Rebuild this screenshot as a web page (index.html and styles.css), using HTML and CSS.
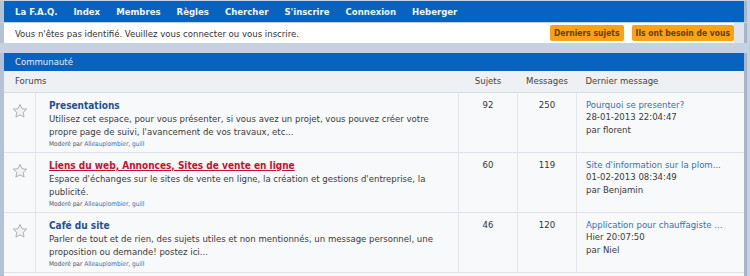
FILE: index.html
```html
<!DOCTYPE html>
<html>
<head>
  <meta charset="utf-8">
  <title>Forum plomberie</title>
  <link rel="stylesheet" href="styles.css">
</head>
<body>
  <div class="nav">
    <a href="#">La F.A.Q.</a>
    <a href="#">Index</a>
    <a href="#">Membres</a>
    <a href="#">Règles</a>
    <a href="#">Chercher</a>
    <a href="#">S'inscrire</a>
    <a href="#">Connexion</a>
    <a href="#">Heberger</a>
  </div>

  <div class="infobar">
    <span class="notice">Vous n'êtes pas identifié. Veuillez vous connecter ou vous inscrire.</span>
    <div class="btns">
      <a class="btn" href="#">Derniers sujets</a>
      <a class="btn" href="#">Ils ont besoin de vous</a>
    </div>
  </div>

  <div class="category">
    <div class="category-title">Communauté</div>
    <table class="forums">
      <tr class="head">
        <th class="c-forum" colspan="2">Forums</th>
        <th class="c-num">Sujets</th>
        <th class="c-num">Messages</th>
        <th class="c-last">Dernier message</th>
      </tr>
      <tr class="row">
        <td class="c-icon">
          <svg class="star" viewBox="0 0 20 20"><path d="M10 1.8l2.5 5.3 5.8.7-4.3 4 1.1 5.8L10 14.8l-5.1 2.8 1.1-5.8-4.3-4 5.8-.7z"/></svg>
        </td>
        <td class="c-forum">
          <a class="title" href="#">Presentations</a>
          <p class="desc">Utilisez cet espace, pour vous présenter, si vous avez un projet, vous pouvez créer votre propre page de suivi, l'avancement de vos travaux, etc...</p>
          <p class="mods">Moderé par <a href="#">Alleauplombier</a>, <a href="#">guill</a></p>
        </td>
        <td class="c-num">92</td>
        <td class="c-num">250</td>
        <td class="c-last">
          <a href="#">Pourquoi se presenter?</a><br>
          28-01-2013 22:04:47<br>
          par florent
        </td>
      </tr>
      <tr class="row">
        <td class="c-icon">
          <svg class="star" viewBox="0 0 20 20"><path d="M10 1.8l2.5 5.3 5.8.7-4.3 4 1.1 5.8L10 14.8l-5.1 2.8 1.1-5.8-4.3-4 5.8-.7z"/></svg>
        </td>
        <td class="c-forum">
          <a class="title hover" href="#">Liens du web, Annonces, Sites de vente en ligne</a>
          <p class="desc">Espace d'échanges sur le sites de vente en ligne, la création et gestions d'entreprise, la publicité.</p>
          <p class="mods">Moderé par <a href="#">Alleauplombier</a>, <a href="#">guill</a></p>
        </td>
        <td class="c-num">60</td>
        <td class="c-num">119</td>
        <td class="c-last">
          <a href="#">Site d'information sur la plom...</a><br>
          01-02-2013 08:34:49<br>
          par Benjamin
        </td>
      </tr>
      <tr class="row">
        <td class="c-icon">
          <svg class="star" viewBox="0 0 20 20"><path d="M10 1.8l2.5 5.3 5.8.7-4.3 4 1.1 5.8L10 14.8l-5.1 2.8 1.1-5.8-4.3-4 5.8-.7z"/></svg>
        </td>
        <td class="c-forum">
          <a class="title" href="#">Café du site</a>
          <p class="desc">Parler de tout et de rien, des sujets utiles et non mentionnés, un message personnel, une proposition ou demande! postez ici...</p>
          <p class="mods">Moderé par <a href="#">Alleauplombier</a>, <a href="#">guill</a></p>
        </td>
        <td class="c-num">46</td>
        <td class="c-num">120</td>
        <td class="c-last">
          <a href="#">Application pour chauffagiste ...</a><br>
          Hier 20:07:50<br>
          par Niel
        </td>
      </tr>
    </table>
  </div>
</body>
</html>
```

FILE: styles.css
```css
body {
  margin: 0;
  padding: 1px 3px 0 0;
  background-color: #c4d2e2;
  font-family: "DejaVu Sans", Verdana, sans-serif;
  font-stretch: condensed;
  font-size: 9.5px;
  color: #333;
}

a {
  text-decoration: none;
}

.nav,
.infobar,
.category {
  border-left: 4px solid #b3c2d4;
  border-right: 3px solid #a7b7ca;
}

/* top menu */
.nav {
  display: flex;
  height: 21px;
  align-items: center;
  padding-left: 11px;
  background-color: #0862c0;
}

.nav a {
  color: #eef4fb;
  font-weight: bold;
  margin-right: 16px;
}

.infobar {
  display: flex;
  align-items: center;
  justify-content: space-between;
  height: 20px;
  margin-top: 1px;
  padding-left: 11px;
  padding-right: 9px;
  background-color: #fff;
  box-shadow: inset -10px 0 0 #dde5ee;
}

.btns {
  display: flex;
  gap: 8px;
  margin-right: 1px;
}

.btn {
  display: block;
  padding: 3px 4px;
  background-color: #f7a21b;
  border-radius: 2px;
  color: #6b3d06;
  font-size: 8.5px;
  font-weight: bold;
}

/* category block */
.category {
  margin-top: 10px;
  padding-bottom: 20px;
  background-color: #f8f9fb;
}

.category-title {
  height: 18px;
  line-height: 18px;
  padding-left: 11px;
  background-color: #0862c0;
  color: #e6eef8;
}

.forums {
  width: 100%;
  border-collapse: collapse;
  background-color: #f8f9fb;
}

.forums tr.head {
  height: 21px;
}

.forums th {
  padding: 0;
  line-height: 20px;
  font-weight: normal;
  color: #444;
  background-color: #eef0f3;
  border-bottom: 1px solid #d5dce4;
}

.forums th.c-forum {
  text-align: left;
  padding-left: 11px;
}

.forums tr.row {
  height: 60px;
}

.forums td {
  padding: 0;
  vertical-align: top;
  border-bottom: 1px solid #dfe3e8;
}

.forums td + td {
  border-left: 1px solid #e3e7ec;
}

.c-icon {
  width: 31px;
  text-align: center;
}

.star {
  width: 16px;
  height: 16px;
  margin-top: 10px;
  fill: #f2f2f2;
  stroke: #a9adb2;
  stroke-width: 1.2;
  stroke-linejoin: round;
}

td.c-forum {
  padding: 6px 8px 0 13px;
}

.title {
  display: block;
  line-height: 13px;
  font-size: 10px;
  font-weight: bold;
  color: #1d5193;
}

.title.hover {
  color: #c8102e;
  text-decoration: underline;
}

.desc {
  margin: 0;
  line-height: 13px;
  color: #3a3a3a;
}

.mods {
  margin: 1px 0 0;
  font-size: 6.5px;
  line-height: 10px;
  color: #555;
}

.mods a {
  color: #3b6fae;
}

.c-num {
  width: 58px;
  text-align: center;
}

.forums td.c-num {
  padding-top: 6px;
}

.c-last {
  width: 158px;
  text-align: left;
}

.forums th.c-last {
  padding-left: 9px;
}

.forums td.c-last {
  padding: 6px 0 0 9px;
  line-height: 12.5px;
  color: #3a3a3a;
}

.c-last a {
  color: #3b6fae;
}
```
